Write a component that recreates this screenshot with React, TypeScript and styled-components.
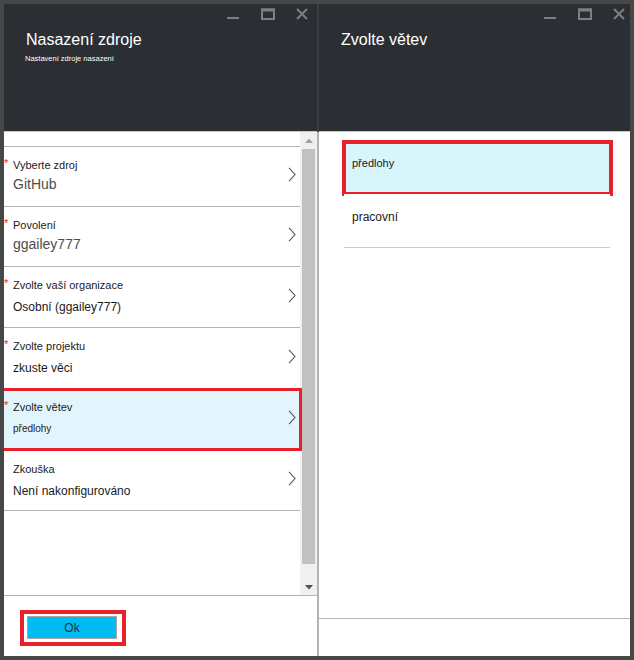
import React from "react";
import styled, { createGlobalStyle } from "styled-components";

const Global = createGlobalStyle`
  html, body { margin: 0; padding: 0; background: #474747; }
  body { font-family: "Liberation Sans", Arial, sans-serif; }
  * { box-sizing: border-box; }
`;

const Frame = styled.div`
  width: 634px;
  height: 660px;
  padding: 4px;
  background: #474747;
  display: flex;
`;

const Panel = styled.section<{ $width?: number }>`
  ${(p) => (p.$width ? `width: ${p.$width}px; flex-shrink: 0;` : "flex: 1;")}
  display: flex;
  flex-direction: column;
  background: #ffffff;
  min-width: 0;
`;

const Divider = styled.div`
  width: 2px;
  flex-shrink: 0;
  background: linear-gradient(to bottom, #3b3e43 0 128px, #b4b4b4 128px);
`;

const Header = styled.header`
  height: 128px;
  flex-shrink: 0;
  background: #2b2f34;
  border-bottom: 1px solid #c8c8c8;
  padding: 4px 0 0 22px;
  display: flex;
  flex-direction: column;
`;

const Controls = styled.div<{ $right: number }>`
  display: flex;
  justify-content: flex-end;
  align-items: flex-start;
  height: 13px;
  padding-right: ${(p) => p.$right}px;
`;

const CtrlIcon = styled.svg<{ $gap?: number }>`
  display: block;
  margin-left: ${(p) => p.$gap ?? 0}px;
  fill: none;
  stroke: #7c7f83;
`;

const Title = styled.h1`
  margin: 9px 0 0;
  font-size: 16px;
  line-height: 20px;
  font-weight: 400;
  color: #ffffff;
`;

const Subtitle = styled.div`
  margin-top: 4px;
  margin-left: -1px;
  font-size: 7.5px;
  line-height: 10px;
  color: #ffffff;
`;

const Body = styled.div`
  flex: 1;
  display: flex;
  min-height: 0;
`;

const List = styled.div`
  flex: 1;
  padding-top: 14px;
`;

const Items = styled.div`
  border-top: 1px solid #b4b4b4;
`;

const Item = styled.div<{ $h: number; $selected?: boolean }>`
  position: relative;
  height: ${(p) => p.$h}px;
  border-bottom: 1px solid #b4b4b4;
  background: ${(p) => (p.$selected ? "#e3f5fc" : "#ffffff")};
  display: flex;
  align-items: flex-start;
  padding-right: 4px;
  ${(p) =>
    p.$selected
      ? `&::after {
    content: "";
    position: absolute;
    top: -1px;
    left: 0;
    right: -2px;
    bottom: -1px;
    border: 3px solid #e8202a;
    border-left: none;
    z-index: 2;
  }`
      : ""}
`;

const Star = styled.span<{ $show: boolean }>`
  width: 9px;
  flex-shrink: 0;
  padding-top: 11px;
  font-size: 11px;
  line-height: 10px;
  color: #e8202a;
  visibility: ${(p) => (p.$show ? "visible" : "hidden")};
`;

const Texts = styled.div`
  flex: 1;
  padding-top: 11px;
  display: flex;
  flex-direction: column;
`;

const Label = styled.div`
  font-size: 11px;
  line-height: 14px;
  color: #1a1a1a;
`;

const Value = styled.div<{ $size: number; $muted?: boolean }>`
  font-size: ${(p) => p.$size}px;
  line-height: ${(p) => (p.$size === 14 ? 18 : p.$size === 12 ? 16 : 14)}px;
  margin-top: ${(p) => (p.$size === 14 ? 3 : p.$size === 12 ? 7 : 8)}px;
  color: ${(p) => (p.$muted ? "#4d4d4d" : "#1a1a1a")};
`;

const ChevronWrap = styled.div`
  align-self: center;
  display: flex;
  margin-bottom: 4px;
`;

const Scrollbar = styled.div`
  width: 17px;
  flex-shrink: 0;
  background: #f0f0f0;
  display: flex;
  flex-direction: column;
`;

const ArrowBtn = styled.div<{ $h: number }>`
  height: ${(p) => p.$h}px;
  display: flex;
  align-items: center;
  justify-content: center;
`;

const Track = styled.div`
  flex: 1;
  padding: 1px 2px 0 2px;
`;

const Thumb = styled.div`
  height: 415px;
  background: #c1c1c1;
`;

const Footer = styled.footer<{ $h: number }>`
  height: ${(p) => p.$h}px;
  flex-shrink: 0;
  border-top: 1px solid #b4b4b4;
  padding: 14px 0 0 16px;
  display: flex;
  align-items: flex-start;
`;

const OkFrame = styled.div`
  border: 4px solid #e8202a;
  padding: 2px 5px 3px 3px;
  display: flex;
`;

const OkButton = styled.button`
  width: 90px;
  height: 23px;
  border: 1px solid #a8a8a8;
  background: #00bcf2;
  color: #1b3442;
  font-family: "Liberation Sans", Arial, sans-serif;
  font-size: 12px;
  padding: 0;
  margin: 0;
  display: flex;
  align-items: center;
  justify-content: center;
`;

const RightList = styled.div`
  flex: 1;
  padding: 8px 20px 0 25px;
`;

const Branch = styled.div<{ $selected?: boolean; $size: number }>`
  position: relative;
  height: 54px;
  border-bottom: 1px solid #cccccc;
  background: ${(p) => (p.$selected ? "#d9f5fc" : "#ffffff")};
  padding: 15px 0 0 8px;
  font-size: ${(p) => p.$size}px;
  line-height: 16px;
  color: #1a1a1a;
  ${(p) =>
    p.$selected
      ? `&::after {
    content: "";
    position: absolute;
    top: 0;
    left: -2px;
    right: -3px;
    bottom: -3px;
    border: 4px solid #e8202a;
  }`
      : ""}
`;

const WindowControls: React.FC<{ right: number }> = ({ right }) => (
  <Controls $right={right}>
    <CtrlIcon width="12" height="13" viewBox="0 0 12 13">
      <line x1="0" y1="10" x2="12" y2="10" strokeWidth="2" />
    </CtrlIcon>
    <CtrlIcon $gap={22} width="14" height="12" viewBox="0 0 14 12">
      <rect x="1" y="1.5" width="12" height="9.5" strokeWidth="2" />
      <line x1="0" y1="2" x2="14" y2="2" strokeWidth="3" />
    </CtrlIcon>
    <CtrlIcon $gap={21} width="12" height="12" viewBox="0 0 12 12">
      <path d="M1 1 L11 11 M11 1 L1 11" strokeWidth="2" />
    </CtrlIcon>
  </Controls>
);

const Chevron = () => (
  <svg width="8" height="15" viewBox="0 0 8 15">
    <path d="M1 0.8 L7 7.5 L1 14.2" fill="none" stroke="#555555" strokeWidth="1.1" />
  </svg>
);

type Row = {
  label: string;
  value: string;
  size: number;
  muted?: boolean;
  star: boolean;
  h: number;
  selected?: boolean;
};

const rows: Row[] = [
  { label: "Vyberte zdroj", value: "GitHub", size: 14, muted: true, star: true, h: 60 },
  { label: "Povolení", value: "ggailey777", size: 14, muted: true, star: true, h: 60 },
  { label: "Zvolte vaší organizace", value: "Osobní (ggailey777)", size: 12, star: true, h: 61 },
  { label: "Zvolte projektu", value: "zkuste věci", size: 12, star: true, h: 61 },
  { label: "Zvolte větev", value: "předlohy", size: 10, star: true, h: 62, selected: true },
  { label: "Zkouška", value: "Není nakonfigurováno", size: 12, star: false, h: 60 },
];

export default function App() {
  return (
    <>
      <Global />
      <Frame>
        <Panel $width={313}>
          <Header>
            <WindowControls right={9} />
            <Title>Nasazení zdroje</Title>
            <Subtitle>Nastavení zdroje nasazení</Subtitle>
          </Header>
          <Body>
            <List>
              <Items>
                {rows.map((r) => (
                  <Item key={r.label} $h={r.h} $selected={r.selected}>
                    <Star $show={r.star}>*</Star>
                    <Texts>
                      <Label>{r.label}</Label>
                      <Value $size={r.size} $muted={r.muted}>
                        {r.value}
                      </Value>
                    </Texts>
                    <ChevronWrap>
                      <Chevron />
                    </ChevronWrap>
                  </Item>
                ))}
              </Items>
            </List>
            <Scrollbar>
              <ArrowBtn $h={16}>
                <svg width="8" height="5" viewBox="0 0 8 5">
                  <polygon points="0,5 8,5 4,0.5" fill="#a3a3a3" />
                </svg>
              </ArrowBtn>
              <Track>
                <Thumb />
              </Track>
              <ArrowBtn $h={16}>
                <svg width="8" height="5" viewBox="0 0 8 5">
                  <polygon points="0,0 8,0 4,4.5" fill="#505050" />
                </svg>
              </ArrowBtn>
            </Scrollbar>
          </Body>
          <Footer $h={61}>
            <OkFrame>
              <OkButton>Ok</OkButton>
            </OkFrame>
          </Footer>
        </Panel>
        <Divider />
        <Panel>
          <Header>
            <WindowControls right={5} />
            <Title>Zvolte větev</Title>
          </Header>
          <RightList>
            <Branch $selected $size={11}>
              předlohy
            </Branch>
            <Branch $size={12}>pracovní</Branch>
          </RightList>
          <Footer $h={38} />
        </Panel>
      </Frame>
    </>
  );
}
